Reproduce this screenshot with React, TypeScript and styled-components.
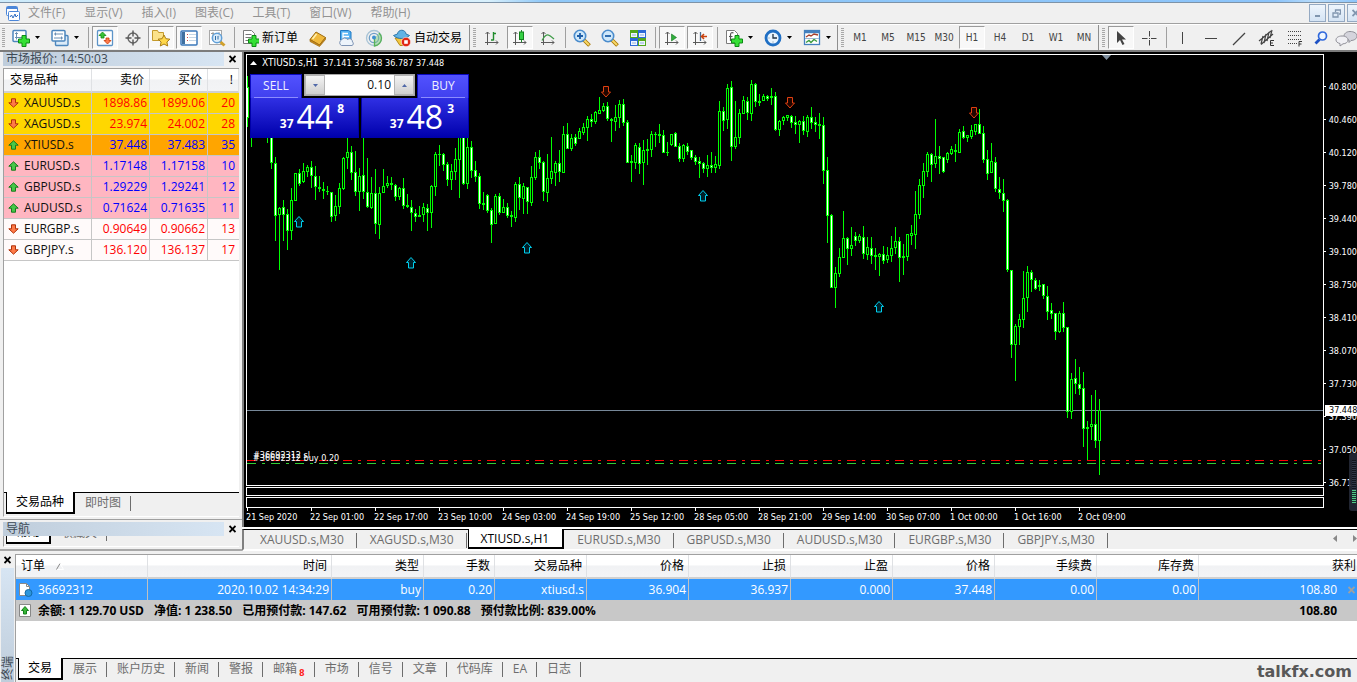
import React from 'react';
import styled, { createGlobalStyle, css } from 'styled-components';

const UI = '"Open Sans", "Noto Sans CJK SC", sans-serif';
const SMALL = '"DejaVu Sans Condensed", "DejaVu Sans", sans-serif';

const Global = createGlobalStyle`
  *, *::before, *::after { box-sizing: border-box; }
  body { margin: 0; background: #f0f0f0; font: 12px/16px ${UI}; color: #000; }
  button, input { font: inherit; color: inherit; margin: 0; padding: 0; border: 0; background: none; }
  svg { display: block; flex: none; }
`;

const Page = styled.div`
  display: flex;
  flex-direction: column;
  height: 100vh;
  min-height: 600px;
  overflow: hidden;
`;

/* ---------- menu bar ---------- */

const TitleEdge = styled.div`
  flex: none;
  height: 3px;
  background: linear-gradient(90deg, #cdeafa 0%, #d8f0fc 36%, #8fc8f8 40%, #8cc4fa 94%, #b9dcfa 97%, #8cc4fa 100%);
  border-bottom: 1px solid #7d93a8;
`;
const MenuBar = styled.nav`
  flex: none;
  display: flex;
  align-items: center;
  gap: 19px;
  height: 21px;
  padding-left: 5px;
  border-bottom: 1px solid #a0a0a0;
  overflow: hidden;
`;
const MenuItem = styled.button`
  color: #929292;
  white-space: nowrap;
`;
const MenuIcon = styled.span`
  margin-right: -11px;
`;
const WindowButtons = styled.div`
  display: flex;
  gap: 2px;
  margin-left: auto;
  margin-right: -7px;
`;
const WindowButton = styled.button`
  display: flex;
  align-items: center;
  justify-content: center;
  width: 17px;
  height: 18px;
  border: 1px solid #94a9c2;
  background: linear-gradient(#eef5fc, #d5e4f4);
`;

/* ---------- toolbar ---------- */

const Toolbar = styled.div`
  flex: none;
  display: flex;
  height: 28px;
  border-top: 1px solid #fff;
  border-bottom: 2px solid #7c7c7c;
  overflow: hidden;
`;
const Group = styled.div`
  display: flex;
  flex: none;
  align-items: center;
  border-right: 1px solid #8e8e8e;
  & + & { padding-left: 1px; }
  &:last-child { border-right: 0; }
`;
const Grip = styled.span`
  width: 3px;
  height: 20px;
  margin: 0 2px;
  background: repeating-linear-gradient(#a8a8a8 0 1px, #f0f0f0 1px 2px);
`;
const pressed = css`
  background: #f8f8f8;
  border-color: #9a9a9a #fff #fff #9a9a9a;
`;
const ToolButton = styled.button<{ $on?: boolean; $narrow?: boolean }>`
  display: flex;
  align-items: center;
  justify-content: center;
  width: ${p => (p.$narrow ? 22 : 26)}px;
  height: 23px;
  margin: 0 1px;
  border: 1px solid transparent;
  ${p => p.$on && pressed}
`;
const PeriodButton = styled(ToolButton)`
  font: 10px/12px ${SMALL};
  color: #444;
`;
const DropButton = styled.button`
  width: 11px;
  height: 23px;
  display: flex;
  align-items: center;
`;
const TextButton = styled.button<{ $wide?: boolean }>`
  display: flex;
  align-items: center;
  gap: 3px;
  width: ${p => (p.$wide ? 81 : 67)}px;
  padding-left: 5px;
  white-space: nowrap;
`;
const Separator = styled.span`
  width: 1px;
  height: 21px;
  margin: 0 2px 0 3px;
  background: #a0a0a0;
`;

/* ---------- docked panels ---------- */

const Workspace = styled.div`
  display: flex;
  flex: 1;
  min-height: 0;
`;
const Side = styled.aside`
  display: flex;
  flex-direction: column;
  flex: none;
  width: 242px;
`;
const PanelTitle = styled.div`
  display: flex;
  align-items: center;
  justify-content: space-between;
  flex: none;
  height: 14px;
  padding: 0 6px 0 3px;
`;
const PanelName = styled.h2`
  flex: 1;
  margin: 0 5px 0 0;
  padding-left: 3px;
  font: 12px/14px ${UI};
  color: #3e4a55;
  background: linear-gradient(90deg, #bfcddb, #d7e5f3);
`;
const CloseButton = styled.button`
  width: 7px;
  height: 8px;
`;
const WatchBox = styled.section`
  display: flex;
  flex-direction: column;
  flex: 1;
  min-height: 0;
  margin: 2px 3px;
  border-top: 1px solid #a0a0a0;
  border-left: 1px solid #a0a0a0;
  border-bottom: 1px solid #fff;
`;
const WatchBody = styled.div`
  flex: 1;
  background: #fff;
  overflow: hidden;
`;
const headCell = css`
  font-weight: normal;
  background: linear-gradient(#fff 45%, #f1f2f4 50%, #f3f4f6);
  border-right: 1px solid #dfe1e4;
  border-bottom: 2px solid #d0d0d0;
`;
const WatchTable = styled.table`
  width: 100%;
  table-layout: fixed;
  border-collapse: separate;
  border-spacing: 0;
  th, td { padding: 0 2px; text-align: right; }
  th { ${headCell} height: 24px; padding-right: 5px; }
  th:first-child { text-align: left; padding-left: 6px; }
`;
const WatchRow = styled.tr<{ $bg: string; $fg: string }>`
  background: ${p => p.$bg};
  td {
    height: 21px;
    line-height: 18px;
    color: ${p => p.$fg};
    border-right: 1px solid #c6c6c6;
    border-bottom: 1px solid #c6c6c6;
  }
  td:first-child { color: #111; text-align: left; }
  td:last-child { padding-right: 4px; border-right-width: 0; }
`;
const SymbolCell = styled.div`
  display: flex;
  align-items: center;
  gap: 5px;
  padding-left: 2px;
`;
const TabStrip = styled.div`
  display: flex;
  flex: none;
  height: 24px;
  align-items: flex-start;
  border-top: 1px solid #000;
  padding-left: 2px;
  background: #f0f0f0;
`;
const Tab = styled.button<{ $on?: boolean }>`
  position: relative;
  height: 20px;
  padding: 0 10px 0 9px;
  line-height: 18px;
  white-space: nowrap;
  color: #6d6d6d;
  &::after {
    content: '';
    position: absolute;
    right: 0;
    top: 3px;
    height: 15px;
    border-right: 1px solid #6d6d6d;
  }
  & + & { margin-left: 1px; }
  ${p => p.$on && css`
    margin-top: -1px;
    height: 22px;
    padding: 0 9px;
    line-height: 20px;
    color: #000;
    background: #fff;
    border: solid #000;
    border-width: 0 2px 2px 1px;
    &::after { display: none; }
  `}
`;
const Navigator = styled.section`
  flex: none;
  height: 32px;
  padding-top: 2px;
  border-top: 1px solid #a0a0a0;
  border-bottom: 2px solid #a8a8a8;
`;
const NavClip = styled.div`
  display: flex;
  align-items: flex-end;
  height: 11px;
  margin: 0 3px;
  border-left: 1px solid #a0a0a0;
  border-bottom: 1px solid #fff;
  overflow: hidden;
`;

/* ---------- chart ---------- */

const ChartColumn = styled.main`
  display: flex;
  flex-direction: column;
  flex: 1;
  min-width: 0;
`;
const ChartWindow = styled.section`
  display: flex;
  flex: 1;
  min-height: 0;
  padding: 2px 0 0 2px;
  background: #000;
  border-left: 2px solid #808080;
  color: #fff;
  font: 9px/12px ${SMALL};
`;
const PlotColumn = styled.div`
  display: flex;
  flex-direction: column;
  flex: 1;
  min-width: 0;
  gap: 1px;
`;
const Plot = styled.div`
  position: relative;
  flex: 1;
  min-height: 0;
  border: 1px solid #fff;
  overflow: hidden;
`;
const SubWindow = styled.div<{ $h: number }>`
  flex: none;
  height: ${p => p.$h}px;
  border: 1px solid #fff;
`;
const TimeAxis = styled.div`
  display: flex;
  flex: none;
  height: 19px;
  margin-top: -1px;
  overflow: hidden;
`;
const TimeLabel = styled.span`
  flex: none;
  width: 64px;
  line-height: 13px;
  white-space: nowrap;
  &::before {
    content: '';
    display: block;
    width: 1px;
    height: 3px;
    margin-left: 1px;
    background: #fff;
  }
`;
const PriceAxis = styled.div`
  position: relative;
  flex: none;
  width: 33px;
  padding-top: 16px;
  overflow: hidden;
`;
const PriceLabel = styled.div`
  display: flex;
  align-items: center;
  gap: 3px;
  height: 33px;
  &::before { content: ''; width: 2px; height: 1px; background: #fff; }
`;
const PriceTag = styled.div`
  position: absolute;
  left: 1px;
  right: 0;
  top: 351px;
  height: 11px;
  padding-left: 4px;
  line-height: 11px;
  color: #000;
  background: #fff;
`;
const Meter = styled.div`
  position: absolute;
  right: 0;
  bottom: 16px;
  width: 8px;
  height: 58px;
  padding: 7px 1px 7px 3px;
  border-radius: 3px 0 0 3px;
  background: #252a38e0;
  &::before, &::after { content: ''; display: block; }
  &::before { height: 30px; background: repeating-linear-gradient(#12151d 0 1px, #303646 1px 2px); }
  &::after { height: 14px; background: repeating-linear-gradient(#4fc987 0 1px, #1c2c2c 1px 2px); }
`;
const ChartCaption = styled.div`
  position: absolute;
  left: 3px;
  top: 2px;
  display: flex;
  align-items: center;
  gap: 5px;
`;
const ChartName = styled.span`
  font-size: 10px;
`;
const TradePanel = styled.div`
  position: absolute;
  left: 3px;
  top: 19px;
  display: grid;
  grid-template-columns: 52px 57px 2px 56px 52px;
  grid-template-rows: 24px 40px;
  background: #000;
  font: 12px/16px ${UI};
`;
const TradeButton = styled.button<{ $buy?: boolean }>`
  grid-row: 1 / 3;
  grid-column: ${p => (p.$buy ? '4 / 6' : '1 / 3')};
  display: flex;
  flex-direction: column;
  align-items: ${p => (p.$buy ? 'flex-end' : 'flex-start')};
`;
const TradeTab = styled.span`
  width: 52px;
  height: 24px;
  padding-top: 3px;
  text-align: center;
  color: #f0f0ff;
  background: linear-gradient(#5252ff, #4040ee);
  border: 1px solid #0a0ac0;
  border-bottom: 0;
`;
const TradePrice = styled.span`
  display: flex;
  justify-content: flex-end;
  align-items: flex-start;
  width: 100%;
  height: 40px;
  padding-right: 14px;
  background: linear-gradient(#3030e4, #0000ac);
  border: 1px solid #0000a8;
  border-top: 0;
  color: #fff;
`;
const TradeRule = styled.span`
  display: block;
  height: 1px;
  margin: 3px 3px 0;
  background: #8c8cff;
`;
const Pips = styled.span<{ $size: 'lead' | 'main' | 'point' }>`
  ${p => p.$size === 'main'
    ? 'font-size: 32px; line-height: 38px; margin: 0 4px 0 3px;'
    : 'font-weight: bold;'}
  ${p => p.$size === 'lead' && 'margin-top: 18px;'}
  ${p => p.$size === 'point' && 'margin-top: 3px;'}
`;
const Stepper = styled.div`
  grid-row: 1;
  grid-column: 2 / 5;
  align-self: start;
  display: flex;
  height: 22px;
  margin: 0 2px;
  border: 1px solid #a8a8a8;
  background: #fff;
`;
const StepButton = styled.button`
  display: flex;
  align-items: center;
  justify-content: center;
  width: 20px;
  background: linear-gradient(#f4f4f4, #cfcfcf);
  border: 1px solid #b4b4b4;
`;
const VolumeInput = styled.input`
  flex: 1;
  min-width: 0;
  padding-right: 3px;
  text-align: right;
  color: #111;
`;
const ChartTabs = styled(TabStrip)`
  height: 22px;
  margin-top: 2px;
  padding-left: 4px;
  border-left: 2px solid #808080;
  border-bottom: 2px solid #fff;
  box-shadow: 0 -2px #fff;
  & > button { height: 20px; padding: 0 13px 0 12px; line-height: 20px; }
`;
const Scrollers = styled.div`
  display: flex;
  gap: 14px;
  margin-left: auto;
  padding-top: 5px;
`;

/* ---------- terminal ---------- */

const Terminal = styled.section`
  display: flex;
  flex: none;
  height: 131px;
`;
const TerminalRail = styled.div`
  display: flex;
  flex-direction: column;
  align-items: center;
  flex: none;
  width: 15px;
  padding-top: 5px;
  gap: 4px;
`;
const RailName = styled.h2`
  flex: 1;
  width: 13px;
  margin: 0;
  padding-top: 2px;
  font: 12px/13px ${UI};
  writing-mode: vertical-rl;
  text-orientation: sideways;
  transform: rotate(180deg);
  color: #3e4a55;
  background: linear-gradient(#bfcddb, #d7e5f3);
`;
const TerminalBody = styled.div`
  display: flex;
  flex-direction: column;
  flex: 1;
  min-width: 0;
  margin-top: 3px;
  border-top: 1px solid #a0a0a0;
  border-left: 1px solid #a0a0a0;
`;
const Orders = styled.div`
  flex: 1;
  background: #fff;
`;
const OrderTable = styled.table`
  width: 100%;
  table-layout: fixed;
  border-collapse: separate;
  border-spacing: 0;
  white-space: nowrap;
  th, td { padding: 0 2px; text-align: right; }
  th { ${headCell} height: 24px; padding-right: 4px; }
  th:first-child, td:first-child { text-align: left; }
  th:first-child { padding-left: 5px; }
  th:last-child { padding-right: 1px; border-right: 0; }
`;
const OrderRow = styled.tr`
  background: #3399ff;
  color: #fff;
  td { height: 21px; line-height: 20px; border-right: 1px solid #c0c0c0; }
  td:last-child { border-right: 0; }
`;
const SummaryRow = styled.tr`
  background: #c8c8c8;
  font-weight: bold;
  td { height: 21px; line-height: 20px; }
  td:last-child { padding-right: 20px; }
`;
const CellLine = styled.div<{ $end?: boolean }>`
  display: flex;
  align-items: center;
  justify-content: ${p => (p.$end ? 'flex-end' : 'flex-start')};
  gap: ${p => (p.$end ? 11 : 5)}px;
`;
const Figures = styled.span`
  display: flex;
  gap: 10px;
`;
const SortHead = styled.div`
  display: flex;
  align-items: center;
  gap: 11px;
`;
const Unread = styled.sub`
  margin-left: 2px;
  font: bold 9px/9px ${SMALL};
  color: #ff2020;
`;
const Brand = styled.span`
  margin: 4px 5px 0 auto;
  font: bold 16px/18px "DejaVu Sans", sans-serif;
  color: #585858;
`;

/* ---------- icons ---------- */

const Svg = ({ w = 18, h = 18, children }: { w?: number; h?: number; children: React.ReactNode }) => (
  <svg width={w} height={h} viewBox={`0 0 ${w} ${h}`} fill="none" aria-hidden="true">{children}</svg>
);
const Cross = ({ color = '#000' }: { color?: string }) => (
  <Svg w={7} h={8}><path d="M.5 1l6 6M6.500 1l-6 6" stroke={color} strokeWidth="1.800" /></Svg>
);
const Plus = () => <path d="M10 6.500h4V10h3.500v4H14v3.500h-4V14H6.500v-4H10z" fill="#35e035" stroke="#0c8a14" />;
const Axes = () => (
  <path d="M4.500 3v13M2 13.500h13M2.500 5l2-2 2 2M13 11.500l2 2-2 2" stroke="#5a5a5a" />
);
const Caret = ({ up = false, color = '#000' }: { up?: boolean; color?: string }) => (
  <Svg w={5} h={3}><path d={up ? 'M0 3h5L2.500 0z' : 'M0 0h5L2.500 3z'} fill={color} /></Svg>
);
const Lens = ({ sign }: { sign: string }) => (
  <Svg>
    <path d="M11 11l5.500 5.500" stroke="#a87808" strokeWidth="3.800" />
    <path d="M11 11l5 5" stroke="#f8d868" strokeWidth="2" />
    <circle cx="7" cy="7" r="5.700" fill="#cfe8fa" stroke="#4a8ccc" strokeWidth="1.600" />
    <path d={sign} stroke="#1f5fa8" strokeWidth="1.800" />
  </Svg>
);
const Sheet = () => <path d="M1.500 1.500h8l3 3v10h-11z" fill="#fff" stroke="#7b7b7b" />;

const icons: Record<string, React.ReactNode> = {
  app: (
    <Svg w={15} h={15}>
      <rect x="1.500" y=".5" width="11" height="9" rx="1" fill="#fff" stroke="#4b86d8" />
      <path d="M2 2h10" stroke="#4b86d8" strokeWidth="2" />
      <rect x="3.500" y="5.500" width="11" height="9" rx="1" fill="#fff" stroke="#4b86d8" />
      <path d="M5 11l1.500-2 1.500 3 2-4 1 3 2-2" stroke="#2f6ec4" />
    </Svg>
  ),
  newChart: (
    <Svg>
      <rect x="1" y="1.500" width="13" height="11" rx="1" fill="#fff" stroke="#4c86bd" strokeWidth="1.500" />
      <path d="M4.500 3.500v7M3 8.500h9M3 5l1.500-1.500L6 5" stroke="#6a8fb4" />
      <Plus />
    </Svg>
  ),
  profiles: (
    <Svg>
      <rect x="4.500" y="6.500" width="12.500" height="10" rx="1" fill="#dcebf8" stroke="#4c86bd" strokeWidth="1.400" />
      <rect x="1" y="1.500" width="13" height="10.500" rx="1" fill="#fff" stroke="#4c86bd" strokeWidth="1.500" />
      <path d="M3 5h9M3 9h9M4.500 3.500v3M10.500 7.500v3" stroke="#6a8fb4" />
    </Svg>
  ),
  market: (
    <Svg>
      <rect x="1.500" y="1.500" width="15" height="15" rx="1" fill="#fff" stroke="#5c94c8" strokeWidth="1.300" />
      <path d="M6.500 3L10 6.500H8V9H5V6.500H3z" fill="#39c339" stroke="#118a11" strokeWidth=".8" />
      <path d="M11.500 15L15 11.500h-2V9h-3v2.500H8z" fill="#ff7c4d" stroke="#c63808" strokeWidth=".8" />
    </Svg>
  ),
  target: (
    <Svg>
      <circle cx="9" cy="9" r="5" stroke="#666" strokeWidth="1.400" />
      <path d="M9 1.500v6M9 10.500v6M1.500 9h6M10.500 9h6" stroke="#555" strokeWidth="1.400" />
    </Svg>
  ),
  favorites: (
    <Svg w={20}>
      <path d="M1.500 1.500h5l1 2h5v8h-11z" fill="#fbe28a" stroke="#c49a2c" />
      <path d="M13 6l1.900 3.700 4 .5-3 2.800.8 4-3.700-2-3.700 2 .8-4-3-2.800 4-.5z" fill="#ffd84a" stroke="#a87c14" />
    </Svg>
  ),
  panel: (
    <Svg>
      <rect x="1" y="2" width="16" height="14" rx="1" fill="#fff" stroke="#3b78ba" strokeWidth="1.500" />
      <path d="M2 3h3v12H2z" fill="#3f6f9f" />
      <path d="M7 5.500h1M7 8.500h1M7 11.500h1" stroke="#d04848" />
      <path d="M9 5.500h7M9 8.500h7M9 11.500h7" stroke="#c4d6e6" />
    </Svg>
  ),
  tester: (
    <Svg>
      <rect x="1.500" y="1.500" width="12" height="14" fill="#fff" stroke="#a8a8a8" />
      <path d="M3 4.500h3M5 3v9M11 3v5" stroke="#9a9a9a" />
      <path d="M12 12.500l4.500 4" stroke="#d0a02c" strokeWidth="3" />
      <circle cx="9" cy="9" r="4.700" fill="#cfe6f8c0" stroke="#5f9fd8" strokeWidth="1.500" />
      <path d="M7.500 7v4M10 7v3.500" stroke="#2f6ea8" />
    </Svg>
  ),
  order: <Svg w={17}><Sheet /><path d="M3.500 5.500h6M3.500 8.500h6M3.500 11.500h4" stroke="#777" /><Plus /></Svg>,
  book: (
    <Svg>
      <path d="M1 10.500L7 3l9.500 5.500-6 7.500z" fill="#f0b93c" stroke="#9c6a10" />
      <path d="M1 10.500v2l9.500 5 6-7V8.500l-6 7.500z" fill="#c88a1c" stroke="#9c6a10" strokeWidth=".7" />
      <path d="M3.500 10L7.500 5" stroke="#fff2b4" strokeWidth="1.500" />
    </Svg>
  ),
  hosting: (
    <Svg>
      <path d="M3.500 1.500h8l2.500 1.500v8h-10.500z" fill="#52b1f2" stroke="#2078c2" />
      <path d="M6 3.500v6M6 4.500h5M6 7.500h6" stroke="#fff" strokeWidth="1.300" />
      <path d="M4.500 16.500a3 3 0 010-5.500 3.500 3.500 0 016-.5 3 3 0 015 2.500 2 2 0 01-.5 3.500z" fill="#edf4fb" stroke="#7d93b4" />
    </Svg>
  ),
  signals: (
    <Svg>
      <circle cx="9" cy="9" r="7.500" stroke="#a9c4d6" strokeWidth="1.300" />
      <circle cx="9" cy="9" r="4.700" stroke="#6f9fc8" strokeWidth="1.300" />
      <path d="M9.500 9v8a8 8 0 007-8A8 8 0 0014 4" fill="#7cc97c80" stroke="#57b257" strokeWidth="1.300" />
      <circle cx="9" cy="8.500" r="2" fill="#3c8fd0" />
    </Svg>
  ),
  robot: (
    <Svg>
      <path d="M2 9h13l-4 7.500H7z" fill="#f4c840" stroke="#b48a18" />
      <path d="M.5 6.500c4 4 12 4 16 0L13 5C12.500 0 5 0 4.500 5z" fill="#62b3e4" stroke="#2d77aa" />
      <circle cx="13" cy="13" r="4.700" fill="#e02814" stroke="#fff" strokeWidth=".6" />
      <path d="M11.200 11.200h3.600v3.600h-3.600z" fill="#fff" />
    </Svg>
  ),
  bars: <Svg><Axes /><path d="M10.500 3v8.500M8 11h2.500M10.500 4.500h2.500" stroke="#1f8c2c" strokeWidth="1.400" /></Svg>,
  candles: (
    <Svg><Axes /><path d="M10.500 1v12" stroke="#1f8c2c" /><rect x="8.500" y="3" width="4" height="7.500" fill="#35d045" stroke="#12801c" /></Svg>
  ),
  line: <Svg><Axes /><path d="M3 11.500C7 4 9 4.500 15 10" stroke="#3f9c48" strokeWidth="1.300" /></Svg>,
  zoomIn: <Lens sign="M4 7h6M7 4v6" />,
  zoomOut: <Lens sign="M4 7h6" />,
  tile: (
    <Svg>
      <path d="M1 1h8v8H1z" fill="#52a81c" /><path d="M9 1h8v8H9z" fill="#2c6ad8" />
      <path d="M1 9h8v8H1z" fill="#2c6ad8" /><path d="M9 9h8v8H9z" fill="#52a81c" />
      <path d="M2 4h6v4H2zM10 4h6v4h-6zM2 12h6v4H2zM10 12h6v4h-6z" fill="#f0f6ff" />
      <path d="M3 6h4M11 6h4M3 14h4M11 14h4" stroke="#8fb0dc" />
    </Svg>
  ),
  autoScroll: <Svg><Axes /><path d="M8.500 5v7l5-3.500z" fill="#2fae3c" stroke="#14761e" strokeWidth=".6" /></Svg>,
  shift: (
    <Svg><Axes /><path d="M9.500 3v9" stroke="#4a6a90" strokeWidth="1.300" /><path d="M16 7.500h-5M13 5l-2.500 2.500L13 10" stroke="#c8400c" strokeWidth="1.500" /></Svg>
  ),
  indicators: (
    <Svg><Sheet /><path d="M8.500 4c-2-1-3 0-3 2v6M4 7.500h3.500" stroke="#555" strokeWidth="1.200" /><Plus /></Svg>
  ),
  clock: (
    <Svg>
      <circle cx="9" cy="9" r="7" fill="#eaf5fe" stroke="#1f6fc4" strokeWidth="2.800" />
      <path d="M9 5v4h4" stroke="#234" strokeWidth="1.300" />
      <path d="M4.500 9h1M9 12.500v1" stroke="#789" />
    </Svg>
  ),
  template: (
    <Svg>
      <rect x="1.500" y="1.500" width="15" height="14" fill="#fff" stroke="#4480be" strokeWidth="1.300" />
      <path d="M1 3h16" stroke="#4480be" strokeWidth="2.500" />
      <path d="M3 8l3-2 2 1 3-2 4 1" stroke="#a8402c" strokeWidth="1.400" />
      <path d="M3 13.500l3-2 2 2 3-3 3 2" stroke="#3c9c40" strokeWidth="1.400" />
      <path d="M2 9.500h14" stroke="#9bb8d4" />
    </Svg>
  ),
  cursor: <Svg w={12}><path d="M2 2v12l3-3 2.500 5 2-1-2.500-4.500h4z" fill="#444" /></Svg>,
  cross: <Svg w={16} h={16}><path d="M8.500 1v5.500M8.500 10v5.500M1 8.500h5.500M10 8.500h5.500" stroke="#444" /><path d="M8 8h1v1H8z" fill="#444" /></Svg>,
  vline: <Svg w={16} h={16}><path d="M7.500 2v12" stroke="#444" /></Svg>,
  hline: <Svg w={16} h={16}><path d="M2 8.500h12" stroke="#444" /></Svg>,
  trend: <Svg w={16} h={16}><path d="M2 15L14 3" stroke="#444" strokeWidth="1.200" /></Svg>,
  channel: (
    <Svg>
      <path d="M1 12L13 2M3 15.500L15 5M5 7l-2 8M8 5L6 14M11 3l-2 9M14 1l-2 8" stroke="#444" strokeWidth="1.200" />
      <path d="M16 11.500h-3.500v5H16M12.500 14H15" stroke="#333" />
    </Svg>
  ),
  fib: (
    <Svg>
      <path d="M2 2.500h14M2 6.500h14M2 10.500h14M2 14.500h9" stroke="#444" strokeDasharray="1 1" />
      <path d="M16 12.500h-3v5M13 15h2.500" stroke="#333" />
    </Svg>
  ),
  find: (
    <Svg w={14} h={14}>
      <path d="M5.500 8.500L1.500 12.500" stroke="#1c50c4" strokeWidth="2.800" />
      <circle cx="8.500" cy="5" r="4" fill="#eef6ff" stroke="#2f68dc" strokeWidth="1.700" />
    </Svg>
  ),
  chat: (
    <Svg w={24}>
      <path d="M15 2.500c4 0 7 1.800 7 4.500s-3 4.500-6 4.500l-2 2v-2.500c-3-.5-5-2-5-4s2-4.500 6-4.500z" fill="#d4d4dc" stroke="#909098" />
      <path d="M7 7c3.500 0 6 1.600 6 4s-2.500 3.800-5 3.800L5 17v-2.500c-2.500-.5-4-1.800-4-3.500C1 8.600 3.500 7 7 7z" fill="#f0f0f4" stroke="#909098" />
    </Svg>
  ),
  minimize: <Svg w={9} h={9}><path d="M2 7h5" stroke="#8095ae" strokeWidth="2" /></Svg>,
  restore: <Svg w={9} h={9}><path d="M3.500 3V1h5v4H7M1 4h5v4H1z" stroke="#8095ae" strokeWidth="1.300" /></Svg>,
  sort: <Svg w={8} h={7}><path d="M.5 6.500L4 .5" stroke="#888" /><path d="M4 .5l3.500 6H1" stroke="#fff" /></Svg>,
  document: (
    <Svg w={15} h={15}>
      <path d="M1.500 1.500h7l3 3v9h-10z" fill="#fff" stroke="#888" />
      <path d="M8.500 1.500v3h3" stroke="#888" />
      <circle cx="10.500" cy="11" r="3.500" fill="#2b95dc" stroke="#126aa8" />
    </Svg>
  ),
  balance: (
    <Svg w={15} h={15}>
      <path d="M1.500 1.500h11v12h-11z" fill="#fff" stroke="#888" />
      <path d="M7 3.500L3.500 7.500h2V11h3V7.500h2z" fill="#38b838" stroke="#14801c" />
    </Svg>
  ),
};

const Trend = ({ up }: { up: boolean }) => (
  <Svg w={11} h={10}>
    {up
      ? <path d="M5.500.8l4.700 4.400H7.500v4h-4v-4H.8z" fill="#48c848" stroke="#167a1c" />
      : <path d="M5.500 9.200l4.700-4.400H7.500v-4h-4v4H.8z" fill="#ff7a48" stroke="#b03008" />}
  </Svg>
);

/* ---------- data ---------- */

type Instrument = [string, string, string, string, boolean, string, string];
const quotes: Instrument[] = [
  ['XAUUSD.s', '1898.86', '1899.06', '20', false, '#ffd700', '#ff0000'],
  ['XAGUSD.s', '23.974', '24.002', '28', false, '#ffd700', '#ff0000'],
  ['XTIUSD.s', '37.448', '37.483', '35', true, '#ffa500', '#0000ff'],
  ['EURUSD.s', '1.17148', '1.17158', '10', true, '#ffb6c1', '#0000ff'],
  ['GBPUSD.s', '1.29229', '1.29241', '12', true, '#ffb6c1', '#0000ff'],
  ['AUDUSD.s', '0.71624', '0.71635', '11', true, '#ffb6c1', '#0000ff'],
  ['EURGBP.s', '0.90649', '0.90662', '13', false, '#fffafa', '#ff0000'],
  ['GBPJPY.s', '136.120', '136.137', '17', false, '#fffafa', '#ff0000'],
];

const priceTicks = ['40.800', '40.460', '40.120', '39.780', '39.440', '39.100', '38.750', '38.410', '38.070', '37.730', '37.390', '37.050', '36.710'];
const timeTicks = ['21 Sep 2020', '22 Sep 01:00', '22 Sep 17:00', '23 Sep 10:00', '24 Sep 03:00', '24 Sep 19:00', '25 Sep 12:00', '28 Sep 05:00', '28 Sep 21:00', '29 Sep 14:00', '30 Sep 07:00', '1 Oct 00:00', '1 Oct 16:00', '2 Oct 09:00'];
const periods = ['M1', 'M5', 'M15', 'M30', 'H1', 'H4', 'D1', 'W1', 'MN'];

/* One bar per entry: high, body top, body bottom, low, and 1 for a falling bar. */
const bars: number[][] = [
  [76,87,118,127,1],[110,115,125,147,0],[100,110,120,130,0],[100,110,120,130,1],[100,110,120,130,0],[110,115,130,143,1],
  [110,120,163,169,1],[157,163,216,241,1],[207,208,215,270,0],[200,207,215,241,1],[209,214,231,250,1],[188,200,231,240,0],
  [173,173,201,201,0],[169,173,184,186,1],[163,171,182,183,0],[165,167,172,177,0],[161,167,176,188,1],[166,176,187,200,1],
  [176,187,189,192,0],[182,189,191,199,1],[186,191,192,195,0],[192,192,217,222,1],[195,206,216,221,0],[183,188,207,214,0],
  [157,158,189,190,0],[138,152,158,169,0],[146,152,173,180,1],[151,172,192,196,1],[168,176,192,211,0],[120,175,192,199,1],
  [158,192,207,208,1],[177,193,208,209,0],[169,193,224,234,1],[187,193,225,239,0],[169,186,193,193,0],[176,183,186,188,0],
  [177,183,185,190,1],[184,185,197,201,1],[187,188,197,200,0],[178,188,206,209,1],[194,205,207,208,1],[200,207,213,231,1],
  [209,213,217,222,1],[206,215,217,217,0],[203,207,215,222,0],[204,208,213,231,1],[185,186,213,228,0],[152,154,187,196,0],
  [145,154,155,166,0],[153,154,165,171,1],[162,164,180,186,1],[164,171,180,190,0],[148,159,172,180,0],[130,130,160,198,0],
  [130,130,184,185,1],[135,147,184,189,0],[141,147,171,178,1],[161,170,177,182,1],[173,176,204,209,1],[192,203,205,210,0],
  [194,195,211,213,1],[208,210,225,243,1],[194,196,224,224,0],[193,196,213,215,1],[199,207,213,213,0],[203,207,216,218,1],
  [211,215,217,227,0],[182,184,218,222,0],[177,184,198,210,1],[183,186,199,214,0],[187,187,202,214,1],[166,177,203,206,0],
  [152,157,178,180,0],[150,157,163,169,1],[161,162,192,201,1],[154,178,193,202,0],[137,171,179,184,0],[161,163,173,186,0],
  [150,163,172,182,1],[126,134,173,173,0],[123,134,149,149,1],[134,138,149,151,0],[134,137,144,146,1],[128,131,139,139,0],
  [123,127,133,135,0],[116,119,128,141,0],[114,119,122,127,1],[111,112,122,124,0],[97,110,114,114,0],[103,106,111,112,0],
  [102,106,119,121,1],[118,119,121,142,0],[105,117,122,131,0],[100,104,118,128,0],[99,104,123,126,1],[120,122,163,163,1],
  [155,161,163,182,0],[143,145,163,169,0],[143,147,164,174,1],[140,150,163,185,0],[139,149,151,165,0],[131,134,150,157,0],
  [132,134,135,147,0],[124,134,136,143,0],[130,135,153,153,1],[142,152,153,156,0],[134,134,145,146,0],[132,133,147,147,1],
  [143,146,159,162,1],[144,145,159,162,0],[143,146,152,155,1],[150,150,158,160,1],[155,157,162,165,1],[157,161,164,178,1],
  [162,163,169,173,1],[155,165,169,177,0],[152,165,168,173,1],[156,164,168,173,0],[101,111,166,169,0],[107,111,121,131,1],
  [84,88,120,129,0],[81,87,147,161,1],[101,137,147,149,0],[109,113,138,144,0],[96,100,114,114,0],[97,101,113,120,1],
  [80,84,114,121,0],[83,84,102,107,1],[94,101,103,106,0],[94,96,101,101,0],[95,96,99,101,1],[88,96,98,105,0],
  [92,96,130,131,1],[120,121,130,136,0],[116,117,121,125,0],[115,115,118,121,0],[115,116,123,128,1],[116,122,125,134,1],
  [120,121,125,143,0],[116,121,131,135,1],[115,117,132,137,0],[107,117,123,129,1],[117,122,125,132,1],[113,124,126,139,0],
  [117,125,171,184,1],[157,170,216,243,1],[214,215,288,288,1],[267,273,288,308,0],[248,257,274,277,0],[211,238,258,258,0],
  [237,238,249,265,1],[227,245,249,256,0],[232,236,241,246,1],[234,236,241,243,0],[226,237,254,259,1],[237,247,255,260,0],
  [237,248,256,264,1],[248,255,257,270,0],[253,254,257,276,0],[246,254,261,264,1],[247,255,260,263,0],[236,248,256,262,0],
  [227,241,248,254,0],[237,241,258,282,1],[244,256,258,275,0],[234,234,257,261,0],[225,233,236,245,0],[191,214,235,249,0],
  [179,185,215,219,0],[163,171,186,198,0],[152,154,172,177,0],[153,154,165,182,1],[119,156,164,168,0],[146,156,159,174,1],
  [157,157,172,173,1],[152,153,160,163,0],[146,149,154,155,0],[144,150,152,162,0],[129,132,153,153,0],[126,131,138,139,1],
  [135,135,138,142,0],[125,130,137,139,0],[124,124,132,135,0],[109,124,134,134,1],[126,133,160,163,1],[150,159,174,180,1],
  [143,161,173,173,0],[157,162,189,192,1],[177,189,193,199,1],[179,193,201,212,1],[199,200,270,272,1],[270,270,345,358,1],
  [324,326,345,381,0],[314,319,327,345,0],[271,298,320,328,0],[266,272,298,312,0],[270,272,280,292,1],[278,280,289,290,1],
  [280,285,287,291,0],[284,284,296,299,1],[286,296,312,320,1],[303,310,314,319,1],[313,313,332,340,1],[311,313,332,333,0],
  [302,313,328,332,1],[327,327,412,418,1],[373,379,412,419,0],[359,378,384,394,1],[367,384,389,395,1],[372,388,429,447,1],
  [421,427,429,460,0],[395,424,427,440,0],[390,424,441,448,1],[399,410,441,475,0],
];
const buyMarks = [[52, 216], [164, 257], [280, 242], [456, 190], [632, 301]];
const sellMarks = [[359, 86], [543, 97], [727, 107]];

const CandleChart = () => (
  <svg width="100%" height="100%" aria-label="XTIUSD.s H1">
    <g transform="translate(0 -55)">
      <g shapeRendering="crispEdges">
        <rect x="0" y="410" width="100%" height="1" fill="#778899" />
        {bars.map(([high, top, bottom, low, down], i) => (
          <g key={i}>
            <rect x={i * 4} y={high} width="1" height={low - high} fill="#00ff00" />
            <rect x={i * 4 - 1} y={top} width="3" height={bottom - top} fill="#00ff00" />
            {bottom - top > 2 && (
              <rect x={i * 4} y={top + 1} width="1" height={bottom - top - 2} fill={down ? '#fff' : '#000'} />
            )}
          </g>
        ))}
        <line x1="0" x2="100%" y1="460.5" y2="460.5" stroke="#ff0000" strokeDasharray="9 6 3 6" />
        <line x1="0" x2="100%" y1="463.5" y2="463.5" stroke="#32cd32" strokeDasharray="9 6 3 6" />
      </g>
      <path d="M855 55h9l-4.500 5z" fill="#8090a0" />
      {buyMarks.map(([x, y]) => (
        <path key={x} transform={`translate(${x} ${y})`} d="M0 .5l4.500 5h-2V11h-5V5.500h-2z" fill="#002028" stroke="#00d0f0" />
      ))}
      {sellMarks.map(([x, y]) => (
        <path key={x} transform={`translate(${x} ${y})`} d="M0 11l4.500-5h-2V.5h-5V6h-2z" fill="#200500" stroke="#e04010" />
      ))}
      <g fill="#fff">
        <text x="6" y="458">#36692312 sl</text>
        <text x="6" y="461">#36692312 buy 0.20</text>
      </g>
    </g>
  </svg>
);

const Tool = ({ icon, on, label, narrow }: { icon: string; on?: boolean; label: string; narrow?: boolean }) => (
  <ToolButton $on={on} $narrow={narrow} aria-label={label}>{icons[icon]}</ToolButton>
);
const Drop = () => <DropButton aria-label="更多"><Caret /></DropButton>;

const Tabs = ({ items, active }: { items: string[]; active: string }) => (
  <>
    {items.map(name => (
      <Tab key={name} $on={name === active}>
        {name}
        {name === '邮箱' && <Unread>8</Unread>}
      </Tab>
    ))}
  </>
);

export default function App() {
  return (
    <Page>
      <Global />
      <TitleEdge />
      <MenuBar>
        <MenuIcon>{icons.app}</MenuIcon>
        {['文件(F)', '显示(V)', '插入(I)', '图表(C)', '工具(T)', '窗口(W)', '帮助(H)'].map(m => (
          <MenuItem key={m}>{m}</MenuItem>
        ))}
        <WindowButtons>
          <WindowButton aria-label="最小化">{icons.minimize}</WindowButton>
          <WindowButton aria-label="还原">{icons.restore}</WindowButton>
          <WindowButton aria-label="关闭"><Cross color="#8095ae" /></WindowButton>
        </WindowButtons>
      </MenuBar>

      <Toolbar>
        <Group>
          <Grip />
          <Tool icon="newChart" label="新图表" /><Drop />
          <Tool icon="profiles" label="配置文件" /><Drop />
          <Separator />
          <Tool icon="market" on label="市场报价" />
          <Tool icon="target" label="数据窗口" />
          <Tool icon="favorites" on label="导航" />
          <Tool icon="panel" on label="终端" />
          <Tool icon="tester" label="策略测试" />
          <Separator />
          <TextButton>{icons.order}新订单</TextButton>
          <Tool icon="book" label="编辑器" />
          <Tool icon="hosting" label="主机" />
          <Tool icon="signals" label="信号" />
          <TextButton $wide>{icons.robot}自动交易</TextButton>
        </Group>
        <Group>
          <Grip />
          <Tool icon="bars" label="柱状图" />
          <Tool icon="candles" on label="蜡烛图" />
          <Tool icon="line" label="折线图" />
          <Separator />
          <Tool icon="zoomIn" label="放大" />
          <Tool icon="zoomOut" label="缩小" />
          <Tool icon="tile" label="平铺窗口" />
          <Separator />
          <Tool icon="autoScroll" on label="自动滚动" />
          <Tool icon="shift" on label="图表平移" />
          <Separator />
          <Tool icon="indicators" label="指标" /><Drop />
          <Tool icon="clock" label="周期" /><Drop />
          <Tool icon="template" label="模板" /><Drop />
        </Group>
        <Group>
          <Grip />
          {periods.map(p => <PeriodButton key={p} $on={p === 'H1'}>{p}</PeriodButton>)}
        </Group>
        <Group>
          <Grip />
          <Tool icon="cursor" on label="光标" />
          <Tool icon="cross" label="十字线" />
          <Separator />
          <Tool icon="vline" label="垂直线" />
          <Tool icon="hline" label="水平线" />
          <Tool icon="trend" label="趋势线" />
          <Tool icon="channel" label="通道" />
          <Tool icon="fib" label="斐波那契" />
          <Tool icon="find" narrow label="搜索" />
          <Tool icon="chat" label="聊天" />
        </Group>
      </Toolbar>

      <Workspace>
        <Side>
          <PanelTitle>
            <PanelName>市场报价: 14:50:03</PanelName>
            <CloseButton aria-label="关闭"><Cross /></CloseButton>
          </PanelTitle>
          <WatchBox>
            <WatchBody>
              <WatchTable>
                <colgroup><col width="88" /><col width="58" /><col width="58" /><col /></colgroup>
                <thead><tr><th>交易品种</th><th>卖价</th><th>买价</th><th>!</th></tr></thead>
                <tbody>
                  {quotes.map(([symbol, bid, ask, spread, up, bg, fg]) => (
                    <WatchRow key={symbol} $bg={bg} $fg={fg}>
                      <td><SymbolCell><Trend up={up} />{symbol}</SymbolCell></td>
                      <td>{bid}</td><td>{ask}</td><td>{spread}</td>
                    </WatchRow>
                  ))}
                </tbody>
              </WatchTable>
            </WatchBody>
            <TabStrip><Tabs items={['交易品种', '即时图']} active="交易品种" /></TabStrip>
          </WatchBox>
          <Navigator>
            <PanelTitle>
              <PanelName>导航</PanelName>
              <CloseButton aria-label="关闭"><Cross /></CloseButton>
            </PanelTitle>
            <NavClip><TabStrip><Tabs items={['常用', '收藏夹']} active="常用" /></TabStrip></NavClip>
          </Navigator>
        </Side>

        <ChartColumn>
          <ChartWindow>
            <PlotColumn>
              <Plot>
                <CandleChart />
                <ChartCaption>
                  <Svg w={7} h={4}><path d="M0 4h7L3.500 0z" fill="#fff" /></Svg>
                  <ChartName>XTIUSD.s,H1</ChartName>
                  <span>37.141 37.568 36.787 37.448</span>
                </ChartCaption>
                <TradePanel>
                  <TradeButton>
                    <TradeTab>SELL<TradeRule /></TradeTab>
                    <TradePrice>
                      <Pips $size="lead">37</Pips><Pips $size="main">44</Pips><Pips $size="point">8</Pips>
                    </TradePrice>
                  </TradeButton>
                  <TradeButton $buy>
                    <TradeTab>BUY<TradeRule /></TradeTab>
                    <TradePrice>
                      <Pips $size="lead">37</Pips><Pips $size="main">48</Pips><Pips $size="point">3</Pips>
                    </TradePrice>
                  </TradeButton>
                  <Stepper>
                    <StepButton aria-label="减少"><Caret color="#5068a8" /></StepButton>
                    <VolumeInput aria-label="手数" defaultValue="0.10" />
                    <StepButton aria-label="增加"><Caret up color="#5068a8" /></StepButton>
                  </Stepper>
                </TradePanel>
              </Plot>
              <SubWindow $h={9} />
              <SubWindow $h={11} />
              <TimeAxis>{timeTicks.map(t => <TimeLabel key={t}>{t}</TimeLabel>)}</TimeAxis>
            </PlotColumn>
            <PriceAxis>
              {priceTicks.map(t => <PriceLabel key={t}>{t}</PriceLabel>)}
              <PriceTag>37.448</PriceTag>
              <Meter />
            </PriceAxis>
          </ChartWindow>
          <ChartTabs>
            <Tabs
              items={['XAUUSD.s,M30', 'XAGUSD.s,M30', 'XTIUSD.s,H1', 'EURUSD.s,M30', 'GBPUSD.s,M30', 'AUDUSD.s,M30', 'EURGBP.s,M30', 'GBPJPY.s,M30']}
              active="XTIUSD.s,H1"
            />
            <Scrollers>
              <Svg w={5} h={8}><path d="M4 0v7L0 3.500z" fill="#888" /></Svg>
              <Svg w={5} h={8}><path d="M1 0v7l4-3.500z" fill="#888" /></Svg>
            </Scrollers>
          </ChartTabs>
        </ChartColumn>
      </Workspace>

      <Terminal>
        <TerminalRail>
          <CloseButton aria-label="关闭"><Cross /></CloseButton>
          <RailName>终端</RailName>
        </TerminalRail>
        <TerminalBody>
          <Orders>
            <OrderTable>
              <colgroup>
                {[132, 184, 92, 71, 92, 102, 102, 102, 102, 102, 102].map((w, i) => <col key={i} width={w} />)}
                <col />
              </colgroup>
              <thead>
                <tr>
                  <th><SortHead>订单{icons.sort}</SortHead></th>
                  {['时间', '类型', '手数', '交易品种', '价格', '止损', '止盈', '价格', '手续费', '库存费', '获利'].map((h, i) => (
                    <th key={i}>{h}</th>
                  ))}
                </tr>
              </thead>
              <tbody>
                <OrderRow>
                  <td><CellLine>{icons.document}36692312</CellLine></td>
                  {['2020.10.02 14:34:29', 'buy', '0.20', 'xtiusd.s', '36.904', '36.937', '0.000', '37.448', '0.00', '0.00'].map((v, i) => (
                    <td key={i}>{v}</td>
                  ))}
                  <td><CellLine $end>108.80<CloseButton aria-label="平仓"><Cross color="#a0a0a0" /></CloseButton></CellLine></td>
                </OrderRow>
                <SummaryRow>
                  <td colSpan={11}>
                    <CellLine>
                      {icons.balance}
                      <Figures>
                        <span>余额: 1 129.70 USD</span>
                        <span>净值: 1 238.50</span>
                        <span>已用预付款: 147.62</span>
                        <span>可用预付款: 1 090.88</span>
                        <span>预付款比例: 839.00%</span>
                      </Figures>
                    </CellLine>
                  </td>
                  <td>108.80</td>
                </SummaryRow>
              </tbody>
            </OrderTable>
          </Orders>
          <TabStrip>
            <Tabs items={['交易', '展示', '账户历史', '新闻', '警报', '邮箱', '市场', '信号', '文章', '代码库', 'EA', '日志']} active="交易" />
            <Brand>talkfx.com</Brand>
          </TabStrip>
        </TerminalBody>
      </Terminal>
    </Page>
  );
}
